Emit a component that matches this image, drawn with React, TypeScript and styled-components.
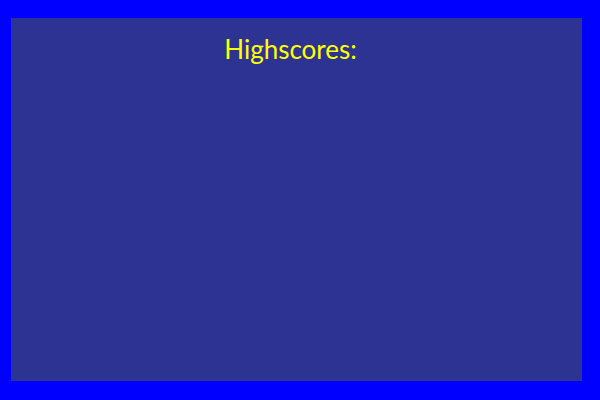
import styled, { createGlobalStyle } from "styled-components";

const Global = createGlobalStyle`
  html, body {
    margin: 0;
    padding: 0;
    background: #0000ff;
  }
`;

const Screen = styled.div`
  width: 600px;
  height: 400px;
  box-sizing: border-box;
  padding: 18px 18px 19px 11px;
  background: #0000ff;
  display: flex;
`;

const Panel = styled.div`
  flex: 1;
  background: #2c3393;
  display: flex;
  flex-direction: column;
  align-items: center;
`;

const Title = styled.h1`
  margin: 15px 12px 0 0;
  font-family: "Lato", "Liberation Sans", sans-serif;
  font-weight: 400;
  font-size: 26px;
  line-height: 32px;
  color: #ffff00;
`;

export default function App() {
  return (
    <Screen>
      <Global />
      <Panel>
        <Title>Highscores:</Title>
      </Panel>
    </Screen>
  );
}
